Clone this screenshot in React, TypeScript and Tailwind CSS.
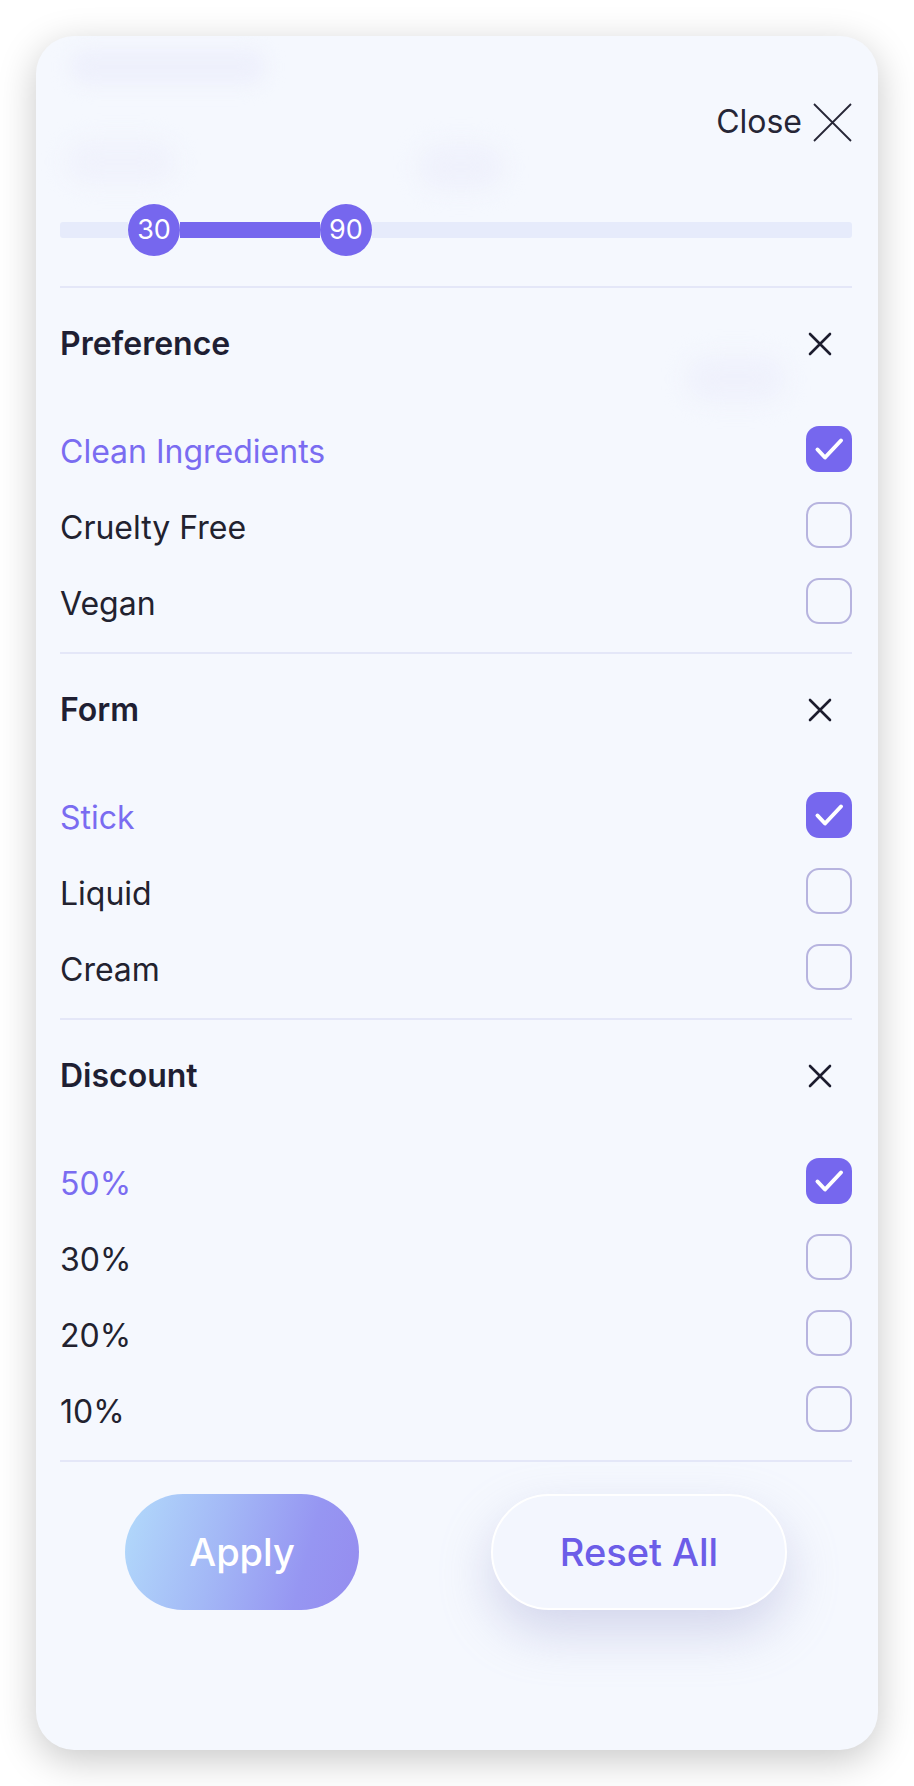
import React from "react"

type Item = { label: string; checked?: boolean }

const sections: { title: string; items: Item[] }[] = [
  {
    title: "Preference",
    items: [{ label: "Clean Ingredients", checked: true }, { label: "Cruelty Free" }, { label: "Vegan" }],
  },
  {
    title: "Form",
    items: [{ label: "Stick", checked: true }, { label: "Liquid" }, { label: "Cream" }],
  },
  {
    title: "Discount",
    items: [{ label: "50%", checked: true }, { label: "30%" }, { label: "20%" }, { label: "10%" }],
  },
]

function Checkbox({ checked }: { checked?: boolean }) {
  if (checked) {
    return (
      <div className="flex h-[46px] w-[46px] items-center justify-center rounded-[13px] bg-[#7667ee]">
        <svg width="46" height="46" viewBox="0 0 46 46" fill="none">
          <path d="M11.5 23.5 L19 31.5 L35 14.5" stroke="white" strokeWidth="4" strokeLinecap="round" strokeLinejoin="round" />
        </svg>
      </div>
    )
  }
  return <div className="h-[46px] w-[46px] rounded-[13px] border-2 border-[#b7b4df]" />
}

function SmallX() {
  return (
    <svg width="24" height="24" viewBox="0 0 24 24" fill="none">
      <path d="M2 2 L22 22 M22 2 L2 22" stroke="#1c1c2e" strokeWidth="2.6" strokeLinecap="round" />
    </svg>
  )
}

function Thumb({ value }: { value: number }) {
  return (
    <div className="flex h-[52px] w-[52px] shrink-0 items-center justify-center rounded-full bg-[#7667ee] text-[27px] text-white">
      {value}
    </div>
  )
}

export default function App() {
  return (
    <div className="min-h-[1786px] bg-white pt-[36px] font-['Inter','Liberation_Sans',sans-serif]">
      <div className="relative mx-[36px] overflow-hidden rounded-[38px] bg-[#f5f8fe] pl-[24px] pr-[26px] pt-[66px] pb-[140px] shadow-[0_10px_38px_rgba(0,0,0,0.22)]">
        {/* faint blurred leftovers behind the panel */}
        <div className="pointer-events-none absolute left-[34px] top-[13px] h-[36px] w-[196px] rounded-full bg-[#eef0fc] blur-[9px]" />
        <div className="pointer-events-none absolute left-[30px] top-[104px] h-[44px] w-[110px] rounded-full bg-[#f0f2fc] blur-[11px]" />
        <div className="pointer-events-none absolute left-[382px] top-[108px] h-[46px] w-[86px] rounded-full bg-[#eff1fc] blur-[11px]" />
        <div className="pointer-events-none absolute left-[650px] top-[320px] h-[46px] w-[100px] rounded-full bg-[#eff1fc] blur-[11px]" />

        {/* close */}
        <div className="relative flex h-[40px] items-center justify-end gap-[11px]">
          <span className="text-[32px] leading-none text-[#262636]">Close</span>
          <svg width="39" height="39" viewBox="0 0 39 39" fill="none">
            <path d="M1 1 L38 38 M38 1 L1 38" stroke="#262636" strokeWidth="1.8" />
          </svg>
        </div>

        {/* range slider */}
        <div className="relative mt-[62px] flex h-[52px] items-center">
          <div className="h-[16px] w-[68px] rounded-l-[3px] bg-[#e6ebfb]" />
          <Thumb value={30} />
          <div className="h-[16px] w-[140px] bg-[#7667ee]" />
          <Thumb value={90} />
          <div className="h-[16px] flex-1 rounded-r-[3px] bg-[#e6ebfb]" />
        </div>

        <div className="mt-[30px] h-[2px] bg-[#e4e7f8]" />

        {sections.map((s) => (
          <div key={s.title} className="relative">
            <div className="flex h-[112px] items-center justify-between">
              <span className="text-[32px] font-semibold text-[#1f1f33]">{s.title}</span>
              <div className="mr-[20px]">
                <SmallX />
              </div>
            </div>
            <div className="pt-[11px] pb-[13px]">
              {s.items.map((it) => (
                <div key={it.label} className="flex h-[76px] items-center justify-between">
                  <span className={it.checked ? "pt-[6px] text-[32px] text-[#7a6cf1]" : "pt-[6px] text-[32px] text-[#22222f]"}>
                    {it.label}
                  </span>
                  <Checkbox checked={it.checked} />
                </div>
              ))}
            </div>
            <div className="h-[2px] bg-[#e4e7f8]" />
          </div>
        ))}

        {/* buttons */}
        <div className="mt-[32px] flex items-center justify-between px-[65px]">
          <button className="flex h-[116px] w-[234px] items-center justify-center rounded-full bg-[linear-gradient(105deg,#b2dafb_0%,#a3b8f6_40%,#9696f2_75%,#958cef_100%)] text-[38px] font-medium text-white">
            Apply
          </button>
          <button className="flex h-[116px] w-[296px] items-center justify-center rounded-full border-2 border-white bg-[#f3f6fe] text-[38px] font-medium text-[#6c5de8] shadow-[0_22px_50px_rgba(170,172,215,0.45)]">
            Reset All
          </button>
        </div>
      </div>
    </div>
  )
}
